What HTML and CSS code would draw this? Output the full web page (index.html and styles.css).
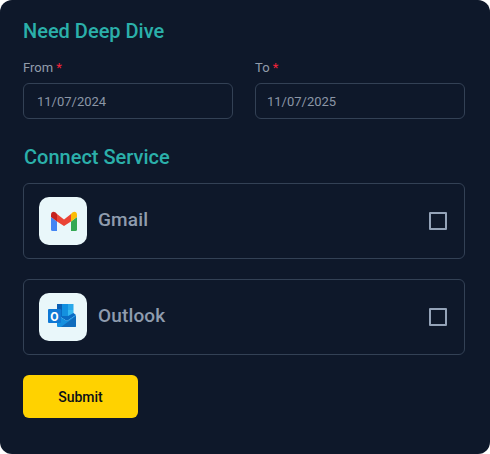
FILE: index.html
```html
<!DOCTYPE html>
<html>
<head>
    <title>Need Deep Dive</title>
    <link rel="stylesheet" href="styles.css">
</head>
<body>
    <form class="panel">
        <h2 class="title">Need Deep Dive</h2>

        <div class="date-row">
            <div class="field">
                <label class="field-label">From <span class="required">*</span></label>
                <input class="date-input" type="text" value="11/07/2024">
            </div>
            <div class="field">
                <label class="field-label">To <span class="required">*</span></label>
                <input class="date-input" type="text" value="11/07/2025">
            </div>
        </div>

        <h2 class="title title-service">Connect Service</h2>

        <div class="service-list">
            <div class="service">
                <div class="service-icon">
                    <svg width="28" height="20" viewBox="-2 0 28 20">
                        <path d="M0 6 L6 10.500 V20 H1.500 A1.500 1.500 0 0 1 0 18.500 Z" fill="#4285f4"/>
                        <path d="M20 10.500 L26 6 V18.500 A1.500 1.500 0 0 1 24.500 20 H20 Z" fill="#34a853"/>
                        <path d="M6 3 L13 8.500 L20 3 V10.500 L13 15 L6 10.500 Z" fill="#ea4335"/>
                        <path d="M0 6 V3.500 C0 0.500 3.500 -0.800 6 3 V10.500 Z" fill="#c5221f"/>
                        <path d="M20 3 C22.500 -0.800 26 0.500 26 3.500 V6 L20 10.500 Z" fill="#fbbc04"/>
                    </svg>
                </div>
                <span class="service-name">Gmail</span>
                <span class="checkbox"></span>
            </div>
            <div class="service">
                <div class="service-icon">
                    <svg width="30" height="26" viewBox="0 0 30 26">
                        <rect x="9" y="0" width="5" height="6" fill="#0a5fb4"/>
                        <rect x="14" y="0" width="6" height="6" fill="#0f8fe0"/>
                        <rect x="20" y="0" width="5.500" height="6" fill="#28a8ea"/>
                        <rect x="9" y="6" width="5" height="6" fill="#0a6cc4"/>
                        <rect x="14" y="6" width="6" height="6" fill="#1490df"/>
                        <rect x="20" y="6" width="5.500" height="6" fill="#35b8f1"/>
                        <path d="M9 12 L14 12 L20 12 L25.500 9 L28 11 L19 17 L9 11 Z" fill="#0a6cc4"/>
                        <path d="M9 11 L19 17 L28 11 V22 A1 1 0 0 1 27 23 H10 A1 1 0 0 1 9 22 Z" fill="#1490df"/>
                        <path d="M13 23 L28 12 V22 A1 1 0 0 1 27 23 Z" fill="#0f6cbd"/>
                        <rect x="0" y="5" width="13" height="14" rx="1" fill="#0f78d4"/>
                        <text class="outlook-letter" x="6.500" y="16.500" text-anchor="middle">O</text>
                    </svg>
                </div>
                <span class="service-name">Outlook</span>
                <span class="checkbox"></span>
            </div>
        </div>

        <button class="submit" type="button">Submit</button>
    </form>
</body>
</html>
```

FILE: styles.css
```css
html, body {
    margin: 0;
    background-color: #ffffff;
}
.panel {
    width: 490px;
    height: 454px;
    box-sizing: border-box;
    padding: 19px 25px 0 23px;
    background-color: #0e182a;
    border-radius: 12px;
    font-family: Roboto, 'Liberation Sans', sans-serif;
}
.title {
    margin: 0;
    font-size: 20px;
    line-height: 24px;
    font-weight: 500;
    color: #2bb0aa;
}
.title-service {
    margin: 26px 0 0 1px;
}
.date-row {
    display: grid;
    grid-template-columns: 210px 210px;
    column-gap: 22px;
    margin-top: 16px;
}
.field-label {
    display: block;
    font-size: 13px;
    line-height: 18px;
    color: #929caa;
}
.required {
    color: #f5233a;
}
.date-input {
    display: block;
    width: 100%;
    height: 36px;
    box-sizing: border-box;
    margin-top: 6px;
    padding: 0 13px;
    background: transparent;
    border: 1px solid #334155;
    border-radius: 6px;
    font-family: inherit;
    font-size: 13px;
    color: #8b96a6;
}
.field:last-child .date-input {
    padding-left: 11px;
}
.service-list {
    display: flex;
    flex-direction: column;
    gap: 20px;
    margin-top: 14px;
}
.service {
    display: flex;
    align-items: center;
    height: 76px;
    box-sizing: border-box;
    padding: 0 17px 0 15px;
    border: 1px solid #334155;
    border-radius: 6px;
}
.service-icon {
    display: flex;
    align-items: center;
    justify-content: center;
    width: 48px;
    height: 48px;
    background-color: #e9f7fa;
    border-radius: 10px;
}
.service-name {
    margin: -4px 0 0 11px;
    font-size: 19px;
    font-weight: 500;
    letter-spacing: 0.15px;
    color: #8f9cae;
}
.checkbox {
    width: 18px;
    height: 18px;
    box-sizing: border-box;
    margin-left: auto;
    border: 2px solid #94a3b8;
    border-radius: 1px;
}
.outlook-letter {
    font-family: Roboto, 'Liberation Sans', sans-serif;
    font-size: 12px;
    font-weight: 700;
    fill: #ffffff;
}
.submit {
    display: block;
    width: 115px;
    height: 43px;
    margin-top: 20px;
    background-color: #ffd200;
    border: none;
    border-radius: 6px;
    font-family: inherit;
    font-size: 14px;
    font-weight: 500;
    color: #0b0f19;
    cursor: pointer;
}
```
